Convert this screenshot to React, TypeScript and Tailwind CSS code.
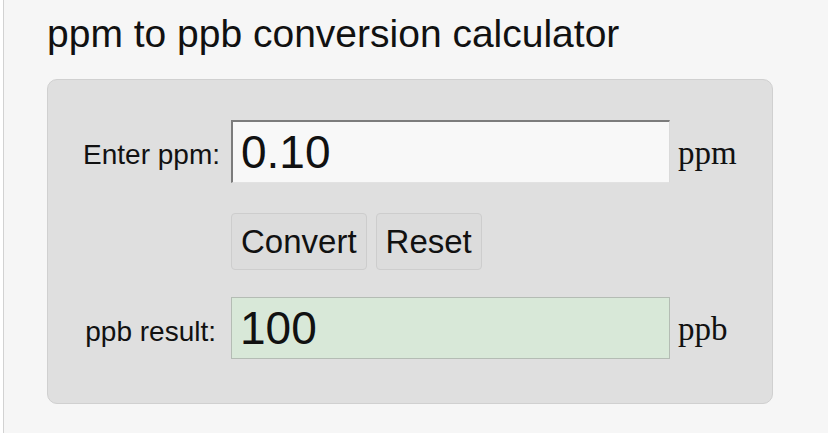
import React, { useState } from "react";

const sans = "font-['Liberation_Sans',Arial,sans-serif]";
const serif = "font-['Liberation_Serif','Times_New_Roman',serif]";

export default function App() {
  const [ppm, setPpm] = useState("0.10");
  const [ppb, setPpb] = useState("100");

  const convert = () => {
    const v = parseFloat(ppm);
    setPpb(isNaN(v) ? "" : String(Math.round(v * 1000 * 1e6) / 1e6));
  };
  const reset = () => {
    setPpm("");
    setPpb("");
  };

  return (
    <div className="h-[444px] w-[838px] bg-white">
      <div
        className={`ml-[3px] h-[433px] w-[825px] border-l border-[#d2d2d2] bg-[#f6f6f6] pl-[43px] pt-[15px] text-[#111] ${sans}`}
      >
        <h1 className="h-[38px] text-[39px] leading-[38px] font-normal">
          ppm to ppb conversion calculator
        </h1>

        <div className="mt-[26px] h-[325px] w-[726px] rounded-[10px] border border-[#d0d0d0] bg-[#dfdfdf] pt-[40px]">
          <div className="grid grid-cols-[183px_439px_auto] items-center">
            {/* row 1 */}
            <label className="pr-[11px] pt-[6px] text-right text-[28px] leading-[28px]">
              Enter ppm:
            </label>
            <input
              value={ppm}
              onChange={(e) => setPpm(e.target.value)}
              className={`h-[63px] w-[439px] border-t-2 border-r border-b border-l-2 border-t-[#7c7c7c] border-r-[#dadada] border-b-[#e2e2e2] border-l-[#7c7c7c] bg-[#f8f8f8] pl-[8px] text-[46px] text-[#111] outline-none ${sans}`}
            />
            <span className={`pt-[4px] pl-[8px] text-[33px] leading-[33px] ${serif}`}>ppm</span>

            {/* row 2 */}
            <div />
            <div className="mt-[30px] flex gap-[9px]">
              <button
                onClick={convert}
                className="h-[57px] rounded-[4px] border border-[#cdcdcd] bg-[#dcdcdc] px-[9px] text-[33px] leading-[33px] text-[#111]"
              >
                Convert
              </button>
              <button
                onClick={reset}
                className="h-[57px] rounded-[4px] border border-[#cdcdcd] bg-[#dcdcdc] px-[9px] text-[33px] leading-[33px] text-[#111]"
              >
                Reset
              </button>
            </div>
            <div />

            {/* row 3 */}
            <label className="mt-[27px] pt-[8px] pr-[15px] text-right text-[28px] leading-[28px]">
              ppb result:
            </label>
            <input
              readOnly
              value={ppb}
              className={`mt-[27px] h-[62px] w-[439px] border border-[#b4bcb4] bg-[#d8e8d8] pl-[8px] text-[46px] text-[#111] outline-none ${sans}`}
            />
            <span className={`mt-[27px] pt-[2px] pl-[8px] text-[33px] leading-[33px] ${serif}`}>ppb</span>
          </div>
        </div>
      </div>
    </div>
  );
}
